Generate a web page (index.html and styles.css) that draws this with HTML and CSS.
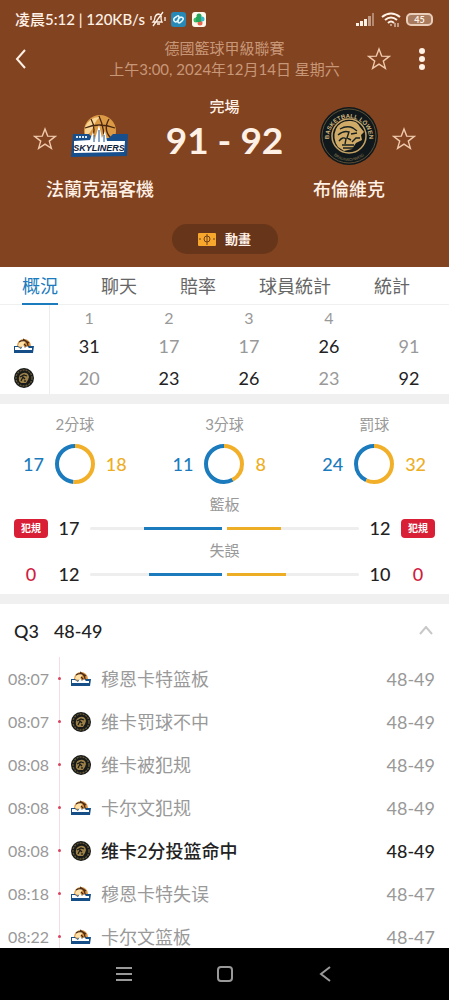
FILE: index.html
```html
<!DOCTYPE html>
<html lang="zh-Hant">
<head>
  <meta charset="UTF-8" />
  <meta name="viewport" content="width=device-width, initial-scale=1.0"/>
  <title>法蘭克福客機 - 布倫維克</title>
  <link rel="stylesheet" href="styles.css">
</head>
<body>

  <!-- Shared icons -->
  <svg class="sprite" aria-hidden="true">
    <symbol id="star" viewBox="0 0 24 24">
      <path d="M12 2 L14.7 9.1 L22.3 9.4 L16.3 14.1 L18.4 21.4 L12 17.2 L5.6 21.4 L7.7 14.1 L1.7 9.4 L9.3 9.1 Z" fill="none" stroke="currentColor" stroke-width="1.4"/>
    </symbol>
    <symbol id="skyliners-small" viewBox="0 0 20 16">
      <circle cx="10" cy="8" r="7" fill="#d99543"/>
      <path d="M4 8 Q5 2 11 1 Q12 5 8 9 Z" fill="#ffe1a7"/>
      <path d="M9 1 Q15 4 14 11 M5 4 Q10 1 15 5 M10 6 L13 9" fill="none" stroke="#4c2c17" stroke-width="1.2"/>
      <path d="M0 8 H4 L6 10 L9 8 L12 10 L15 8 H20 L19 15 H0 Z" fill="#164f87"/>
      <path d="M1 9 H4 L7 11 L9 7 L11 10 L13 8 L15 10 H18 V12 H1 Z" fill="#fff"/>
    </symbol>
    <symbol id="lowen-small" viewBox="0 0 20 20">
      <circle cx="10" cy="10" r="10" fill="#171a19"/>
      <circle cx="10" cy="10" r="8" fill="none" stroke="#665735" stroke-width="1.4" stroke-dasharray="2 1"/>
      <path d="M5 13 Q4 6 9 5 Q14 4 15 9 L14 12 L12 15 L7 15 Z" fill="#9c8048"/>
      <path d="M6 9 L10 7 L13 8 M7 13 L9 9 L11 11 M11 14 V12" fill="none" stroke="#171a19" stroke-width="1.2"/>
    </symbol>
  </svg>

  <header>
    <div class="status-bar">
      <span>凌晨5:12 | 120KB/s</span>
      <svg class="mute" width="18" height="16" viewBox="0 0 18 16" fill="none" stroke="currentColor" stroke-width="1.3">
        <path d="M4 11 Q6 9 6 6 Q7 3 10 3 Q13 4 12 7 Q12 9 13 11 Z M8 13 H11 M14 1 L4 15 M2 5 V9 M16 6 V10"/>
      </svg>
      <svg width="15" height="15" viewBox="0 0 15 15">
        <rect width="15" height="15" rx="3" fill="#2789b5"/>
        <path d="M4 10 Q1 7 5 5 Q8 2 8 6 Q7 10 4 10 M10 5 Q14 6 11 9 Q7 13 7 9 Q7 6 10 5" fill="none" stroke="#e8f8ff" stroke-width="1.6"/>
      </svg>
      <svg width="14" height="15" viewBox="0 0 14 15">
        <rect width="14" height="15" rx="3" fill="#fff8ec"/>
        <circle cx="7" cy="4" r="2.5" fill="#27a55a"/>
        <circle cx="10" cy="7" r="2.5" fill="#36b9ca"/>
        <circle cx="4" cy="8" r="2.5" fill="#3cbb67"/>
        <circle cx="8" cy="11" r="2.5" fill="#e9674e"/>
        <rect x="4" y="5" width="5" height="5" fill="#27a55a"/>
      </svg>
      <span class="status-right">
        <svg width="20" height="13" viewBox="0 0 20 13" fill="currentColor">
          <rect x="0" y="10" width="3" height="3"/><rect x="4" y="8" width="3" height="5"/><rect x="8" y="6" width="3" height="7"/>
          <rect x="12" y="3" width="3" height="10" opacity=".5"/><rect x="16" y="0" width="2" height="13" opacity=".4"/>
        </svg>
        <svg width="20" height="15" viewBox="0 0 20 15" fill="none" stroke="currentColor" stroke-width="2">
          <path d="M1 5 Q10 -2 19 5 M4 8 Q10 3 16 8 M7 11 Q10 8 13 11"/><path d="M10 12 V14 M14 11 V15 M17 11 V15" stroke-width="1"/>
        </svg>
        <span class="battery">45</span>
      </span>
    </div>

    <div class="top-bar">
      <button class="icon-btn" aria-label="返回">
        <svg width="12" height="20" viewBox="0 0 12 20" fill="none" stroke="currentColor" stroke-width="2"><path d="M10 1 L2 10 L10 19"/></svg>
      </button>
      <div class="league">
        <div>德國籃球甲級聯賽</div>
        <div>上午3:00, 2024年12月14日 星期六</div>
      </div>
      <button class="icon-btn" aria-label="收藏"><svg class="star-icon"><use href="#star"/></svg></button>
      <button class="icon-btn" aria-label="更多">
        <svg width="6" height="24" viewBox="0 0 6 24" fill="currentColor"><circle cx="3" cy="4" r="3"/><circle cx="3" cy="12" r="3"/><circle cx="3" cy="20" r="3"/></svg>
      </button>
    </div>

    <div class="match">
      <button class="icon-btn" aria-label="收藏法蘭克福客機"><svg class="star-icon"><use href="#star"/></svg></button>
      <div class="team">
        <div class="crest">
          <svg width="58" height="44" viewBox="0 0 58 44">
            <circle cx="29" cy="17" r="16" fill="#dc9a45"/>
            <path d="M14 13 Q19 2 30 3 Q25 5 23 12 Q20 18 14 24 Z" fill="#f8d594"/>
            <path d="M28 2 Q34 15 33 31 M14 14 Q28 8 44 14 M38 5 Q31 17 42 26 M20 5 Q26 15 20 28" fill="none" stroke="#47250f" stroke-width="1.3"/>
            <path d="M2 20 L18 20 L22 24 L25 24 L28 15 L31 24 L38 24 L42 20 L57 20 L56 42 L0 43 Z" fill="#174f8d"/>
            <path d="M3 27 L19 26 L22 18 L24 25 L28 11 L31 24 L34 17 L36 27 L54 27 L53 38 L3 39 Z" fill="#fff"/>
            <path d="M23 21 V28 M28 16 V28 M33 21 V28" stroke="#174f8d" stroke-width="1"/>
            <path d="M5 23 H17" stroke="#dfe9f2" stroke-width="2" stroke-dasharray="2 1"/>
            <text class="logo-word" x="28" y="37" text-anchor="middle">SKYLINERS</text>
          </svg>
        </div>
        <div class="team-name">法蘭克福客機</div>
      </div>
      <div class="result">
        <div class="state">完場</div>
        <div class="score">91 - 92</div>
      </div>
      <div class="team">
        <div class="crest">
          <svg width="58" height="58" viewBox="0 0 58 58">
            <circle cx="29" cy="29" r="29" fill="#10181b"/>
            <circle cx="29" cy="29" r="27" fill="none" stroke="#5c5035" stroke-width="1"/>
            <circle cx="29" cy="29" r="17" fill="#12191b" stroke="#c5a265" stroke-width="1.5"/>
            <path d="M18 40 Q12 31 16 22 Q20 14 29 14 Q37 13 40 20 L44 25 L41 28 L42 33 L36 36 L32 42 L24 44 Z" fill="#d0ab68"/>
            <path d="M20 22 Q27 18 33 21 L37 24 M18 28 Q24 23 29 25 L27 31 L31 33 M19 34 Q23 29 26 32 L25 37 M31 27 L37 26 M32 35 L36 31 L40 31" fill="none" stroke="#172020" stroke-width="1.4"/>
            <path d="M22 38 H34 M23 41 H33" stroke="#172020" stroke-width="1.5"/>
            <path id="arc-top" d="M9 31 A20 20 0 1 1 49 31" fill="none"/>
            <path id="arc-bottom" d="M6 31 A23 23 0 0 0 52 31" fill="none"/>
            <text class="crest-word"><textPath href="#arc-top" startOffset="50%" text-anchor="middle">BASKETBALL LÖWEN</textPath></text>
            <text class="crest-town"><textPath href="#arc-bottom" startOffset="50%" text-anchor="middle">BRAUNSCHWEIG</textPath></text>
          </svg>
        </div>
        <div class="team-name">布倫維克</div>
      </div>
      <button class="icon-btn" aria-label="收藏布倫維克"><svg class="star-icon"><use href="#star"/></svg></button>
    </div>

    <button class="animation-btn">
      <svg width="18" height="13" viewBox="0 0 18 13">
        <rect width="18" height="13" rx="1" fill="#f6a72c"/>
        <path d="M9 1 V12 M1 6 H3 M15 6 H17" stroke="#70401b" stroke-width="1"/><circle cx="9" cy="6" r="3" fill="none" stroke="#70401b" stroke-width="1"/>
      </svg>
      動畫
    </button>
  </header>

  <main>
    <nav class="tabs">
      <a class="active" href="#overview">概況</a>
      <a href="#chat">聊天</a>
      <a href="#odds">賠率</a>
      <a href="#players">球員統計</a>
      <a href="#stats">統計</a>
    </nav>

    <table class="quarters" id="overview">
      <thead>
        <tr><th class="logo-col"></th><th>1</th><th>2</th><th>3</th><th>4</th><th></th></tr>
      </thead>
      <tbody>
        <tr>
          <td class="logo-col"><svg width="20" height="16"><use href="#skyliners-small"/></svg></td>
          <td class="win">31</td><td>17</td><td>17</td><td class="win">26</td><td>91</td>
        </tr>
        <tr>
          <td class="logo-col"><svg width="20" height="20"><use href="#lowen-small"/></svg></td>
          <td>20</td><td class="win">23</td><td class="win">26</td><td>23</td><td class="win">92</td>
        </tr>
      </tbody>
    </table>

    <section class="stats" id="stats">
      <div class="rings">
        <div class="ring">
          <div class="label">2分球</div>
          <div class="ring-row">
            <span class="home">17</span>
            <svg viewBox="0 0 40 40"><circle class="ring-home" cx="20" cy="20" r="18" pathLength="35" stroke-dasharray="0 18 17"/><circle class="ring-away" cx="20" cy="20" r="18" pathLength="35" stroke-dasharray="18 17"/></svg>
            <span class="away">18</span>
          </div>
        </div>
        <div class="ring">
          <div class="label">3分球</div>
          <div class="ring-row">
            <span class="home">11</span>
            <svg viewBox="0 0 40 40"><circle class="ring-home" cx="20" cy="20" r="18" pathLength="19" stroke-dasharray="0 8 11 0"/><circle class="ring-away" cx="20" cy="20" r="18" pathLength="19" stroke-dasharray="8 11"/></svg>
            <span class="away">8</span>
          </div>
        </div>
        <div class="ring">
          <div class="label">罰球</div>
          <div class="ring-row">
            <span class="home">24</span>
            <svg viewBox="0 0 40 40"><circle class="ring-home" cx="20" cy="20" r="18" pathLength="56" stroke-dasharray="0 32 24 0"/><circle class="ring-away" cx="20" cy="20" r="18" pathLength="56" stroke-dasharray="32 24"/></svg>
            <span class="away">32</span>
          </div>
        </div>
      </div>

      <div class="label">籃板</div>
      <div class="bar-row">
        <span class="foul-tag">犯規</span>
        <span>17</span>
        <div class="bars">
          <div class="bar bar-home"><i style="width: 59%"></i></div>
          <div class="bar bar-away"><i style="width: 41%"></i></div>
        </div>
        <span>12</span>
        <span class="foul-tag">犯規</span>
      </div>
      <div class="label">失誤</div>
      <div class="bar-row">
        <span class="fouls">0</span>
        <span>12</span>
        <div class="bars">
          <div class="bar bar-home"><i style="width: 55%"></i></div>
          <div class="bar bar-away"><i style="width: 45%"></i></div>
        </div>
        <span>10</span>
        <span class="fouls">0</span>
      </div>
    </section>

    <section class="plays" lang="zh-Hans">
      <button class="plays-head">
        <span>Q3</span>
        <span>48-49</span>
        <svg width="14" height="9" viewBox="0 0 14 9" fill="none" stroke="#c8c8c8" stroke-width="2"><path d="M1 8 L7 1 L13 8"/></svg>
      </button>
      <ul>
        <li><time>08:07</time><span class="dot"></span><svg class="badge"><use href="#skyliners-small"/></svg><span class="text">穆恩卡特篮板</span><span>48-49</span></li>
        <li><time>08:07</time><span class="dot"></span><svg class="badge"><use href="#lowen-small"/></svg><span class="text">维卡罚球不中</span><span>48-49</span></li>
        <li><time>08:08</time><span class="dot"></span><svg class="badge"><use href="#lowen-small"/></svg><span class="text">维卡被犯规</span><span>48-49</span></li>
        <li><time>08:08</time><span class="dot"></span><svg class="badge"><use href="#skyliners-small"/></svg><span class="text">卡尔文犯规</span><span>48-49</span></li>
        <li class="scored"><time>08:08</time><span class="dot"></span><svg class="badge"><use href="#lowen-small"/></svg><span class="text">维卡2分投篮命中</span><span>48-49</span></li>
        <li><time>08:18</time><span class="dot"></span><svg class="badge"><use href="#skyliners-small"/></svg><span class="text">穆恩卡特失误</span><span>48-47</span></li>
        <li><time>08:22</time><span class="dot"></span><svg class="badge"><use href="#skyliners-small"/></svg><span class="text">卡尔文篮板</span><span>48-47</span></li>
      </ul>
    </section>
  </main>

  <footer>
    <button aria-label="最近"><svg width="16" height="16" viewBox="0 0 16 16"><path d="M0 2 H16 M0 8 H16 M0 14 H16"/></svg></button>
    <button aria-label="主畫面"><svg width="16" height="16" viewBox="0 0 16 16"><rect x="1" y="1" width="14" height="14" rx="3"/></svg></button>
    <button aria-label="返回"><svg width="16" height="16" viewBox="0 0 16 16"><path d="M12 1 L3 8 L12 15"/></svg></button>
  </footer>

</body>
</html>
```
FILE: styles.css
```css
/* Reset and Base */
* {
  box-sizing: border-box;
  margin: 0;
  padding: 0;
}

body {
  display: flex;
  flex-direction: column;
  height: 100vh;
  overflow: hidden;
  font-family: Lato, "Noto Sans CJK TC", sans-serif;
  font-size: 18px;
  line-height: 24px;
  color: #222;
  background: #fff;
}

button {
  border: none;
  background: none;
  color: inherit;
  font: inherit;
  cursor: pointer;
}

svg {
  display: block;
}

.sprite {
  position: absolute;
  width: 0;
  height: 0;
}

.logo-word {
  font: italic bold 9px "Liberation Sans", sans-serif;
  fill: #10233c;
}

.crest-word {
  font: bold 6px "Liberation Sans", sans-serif;
  fill: #d2b57c;
}

.crest-town {
  font: 4px "Liberation Sans", sans-serif;
  fill: #8f7c54;
}

/* Header */
header {
  flex: none;
  display: flex;
  flex-direction: column;
  background: #824320;
  color: #fff1e6;
}

.status-bar {
  display: flex;
  align-items: center;
  gap: 6px;
  height: 38px;
  padding: 0 16px 0 15px;
  font-size: 15px;
  font-weight: 500;
}

.mute {
  margin: 0 -2px;
}

.status-right {
  display: flex;
  align-items: center;
  gap: 5px;
  margin-left: auto;
}

.battery {
  width: 27px;
  height: 13px;
  border: 2px solid #e9cdb9;
  border-radius: 5px;
  background: #a87a5e;
  font-size: 9px;
  font-weight: bold;
  line-height: 9px;
  text-align: center;
}

.top-bar {
  display: flex;
  align-items: center;
  justify-content: space-between;
  height: 42px;
  padding: 0 24px 0 15px;
}

.icon-btn {
  display: flex;
  justify-content: center;
  align-items: center;
}

.star-icon {
  width: 24px;
  height: 24px;
  color: #f0c9ac;
}

.league {
  flex: 1;
  margin-left: 55px;
  color: #c89778;
  font-size: 15px;
  line-height: 21px;
  text-align: center;
}

.league + .icon-btn {
  margin: 0 28px 0 0;
}

.match {
  display: grid;
  grid-template-columns: 24px 86px 1fr 86px 24px;
  height: 126px;
  padding: 14px 33px 0;
}

.match .icon-btn {
  height: 90px;
}

.team {
  display: flex;
  flex-direction: column;
  align-items: center;
}

.crest {
  display: flex;
  align-items: center;
  height: 83px;
}

.team-name {
  font-weight: 500;
  white-space: nowrap;
}

.result {
  text-align: center;
}

.state {
  font-size: 15px;
  font-weight: 500;
}

.score {
  font-size: 37px;
  font-weight: bold;
  line-height: 44px;
}

.animation-btn {
  display: flex;
  align-items: center;
  justify-content: center;
  gap: 9px;
  align-self: center;
  width: 106px;
  height: 30px;
  margin: 18px 0 13px;
  border-radius: 15px;
  background: #673519;
  font-size: 13px;
  font-weight: bold;
}

/* Content */
main {
  flex: 1;
  min-height: 0;
  overflow: hidden;
}

.tabs {
  display: flex;
  gap: 43px;
  height: 38px;
  padding: 0 22px;
  border-bottom: 1px solid #f0f0f0;
}

.tabs a {
  height: 38px;
  color: #666;
  line-height: 38px;
  text-decoration: none;
  white-space: nowrap;
}

.tabs .active {
  border-bottom: 2px solid #1b7bbd;
  color: #1b7bbd;
}

.quarters {
  width: 100%;
  border-collapse: collapse;
  table-layout: fixed;
  color: #999;
  text-align: center;
}

.quarters th {
  height: 25px;
  font-size: 16px;
  font-weight: normal;
}

.quarters td {
  height: 32px;
}

.quarters .logo-col {
  width: 49px;
  border-right: 1px solid #ececec;
}

.logo-col svg {
  margin: 0 auto;
}

.quarters .win {
  color: #222;
}

.stats,
.plays {
  border-top: 10px solid #f0f0f0;
}

.stats {
  padding: 8px 0 10px;
}

.label {
  color: #999;
  font-size: 15px;
  line-height: 24px;
  text-align: center;
}

.rings {
  display: grid;
  grid-template-columns: repeat(3, 1fr);
}

.ring-row {
  display: grid;
  grid-template-columns: 1fr 40px 1fr;
  align-items: center;
  gap: 11px;
  padding: 8px 0;
  font-weight: 500;
}

.ring-row .home {
  color: #1b7bbd;
  text-align: right;
}

.ring-row .away {
  color: #edae25;
}

.ring-row svg {
  transform: rotate(-90deg);
}

.ring-row circle {
  fill: none;
  stroke-width: 4;
}

.ring-home {
  stroke: #1b7bbd;
}

.ring-away {
  stroke: #f2b02a;
}

.bar-row {
  display: grid;
  grid-template-columns: 34px 24px 1fr 24px 34px;
  align-items: center;
  gap: 9px;
  height: 22px;
  padding: 0 14px;
  font-weight: 500;
  text-align: center;
}

.foul-tag {
  border-radius: 4px;
  background: #d91f35;
  color: #fff;
  font-size: 10px;
  font-weight: bold;
  line-height: 19px;
}

.fouls {
  color: #d02040;
}

.bars {
  display: grid;
  grid-template-columns: 1fr 1fr;
  gap: 5px;
}

.bar {
  display: flex;
  height: 3px;
  border-radius: 2px;
  background: #eee;
}

.bar-home {
  justify-content: flex-end;
}

.bar-home i {
  background: #1b7bbd;
}

.bar-away i {
  background: #edae25;
}

/* Play by play */
.plays {
  font-family: Lato, "Noto Sans CJK SC", sans-serif;
}

.plays-head {
  display: flex;
  align-items: center;
  gap: 15px;
  width: 100%;
  height: 53px;
  padding: 0 16px 0 14px;
  font-weight: 500;
}

.plays-head svg {
  margin-left: auto;
}

.plays ul {
  list-style: none;
  background: linear-gradient(#f3dfe3, #f3dfe3) 59px 0 / 1px 100% no-repeat;
}

.plays li {
  display: grid;
  grid-template-columns: 40px 3px 20px 1fr auto;
  align-items: center;
  column-gap: 10px;
  height: 43px;
  padding: 0 14px 0 8px;
  color: #999;
}

.plays time {
  font-size: 16px;
}

.dot {
  width: 3px;
  height: 3px;
  border-radius: 50%;
  background: #d9435f;
}

.badge {
  width: 20px;
  height: 20px;
}

.plays .scored {
  color: #222;
  font-weight: 500;
}

.scored time {
  color: #999;
  font-weight: normal;
}

/* System navigation */
footer {
  flex: none;
  display: flex;
  justify-content: center;
  gap: 85px;
  height: 52px;
  background: #000;
}

footer svg {
  fill: none;
  stroke: #999;
  stroke-width: 2;
}
```
